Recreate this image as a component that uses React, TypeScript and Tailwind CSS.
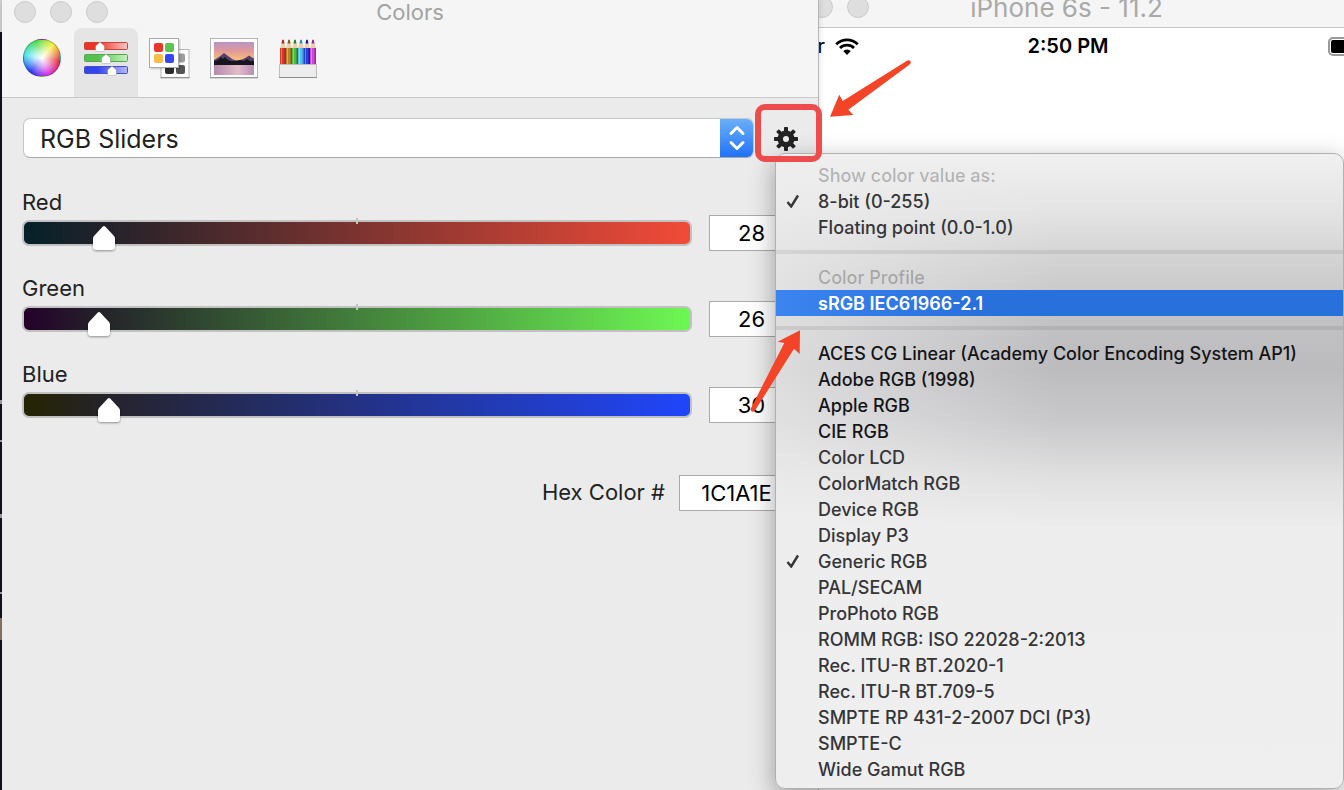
import React, { useState } from "react";

const FONT = "font-['Inter','Liberation_Sans',sans-serif]";

const PROFILES = [
  "ACES CG Linear (Academy Color Encoding System AP1)",
  "Adobe RGB (1998)",
  "Apple RGB",
  "CIE RGB",
  "Color LCD",
  "ColorMatch RGB",
  "Device RGB",
  "Display P3",
  "Generic RGB",
  "PAL/SECAM",
  "ProPhoto RGB",
  "ROMM RGB: ISO 22028-2:2013",
  "Rec. ITU-R BT.2020-1",
  "Rec. ITU-R BT.709-5",
  "SMPTE RP 431-2-2007 DCI (P3)",
  "SMPTE-C",
  "Wide Gamut RGB",
];

function TrafficLights() {
  return (
    <div className="flex gap-3.5">
      {["Close", "Minimize", "Zoom"].map((name) => (
        <button
          key={name}
          type="button"
          aria-label={name}
          className="size-[22px] shrink-0 rounded-full border border-[#cbcbcb] bg-[#dedede]"
        />
      ))}
    </div>
  );
}

function WheelIcon() {
  return (
    <span className="size-[38px] rounded-full border border-black/25 bg-[radial-gradient(circle,#fff_0%,rgba(255,255,255,0.6)_30%,rgba(255,255,255,0)_68%),conic-gradient(from_100deg,#e8303c,#d838e8_60deg,#2a3cf0_120deg,#4fe6f0_180deg,#4fdc50_240deg,#f6f040_300deg,#e8303c)]" />
  );
}

function SlidersIcon() {
  const rows = [
    { y: 1, id: "si-r", a: "#ee3322", b: "#fbc6c6", s: "#c8433a", x: 17 },
    { y: 13, id: "si-g", a: "#55c04d", b: "#c6f4bd", s: "#58a650", x: 23 },
    { y: 25, id: "si-b", a: "#3344ee", b: "#b5b9fb", s: "#4650c0", x: 29 },
  ];
  return (
    <svg width="46" height="36" viewBox="0 -1 46 36" aria-hidden="true">
      {rows.map((r) => (
        <g key={r.id}>
          <linearGradient id={r.id}>
            <stop offset="0.3" stopColor={r.a} />
            <stop offset="1" stopColor={r.b} />
          </linearGradient>
          <rect x="1.5" y={r.y + 0.5} width="43" height="7" rx="1" fill={`url(#${r.id})`} stroke={r.s} />
          <path
            d={`M${r.x} ${r.y} l4.500 4 v4 q0 1.500 -1.500 1.500 h-6 q-1.500 0 -1.500 -1.500 v-4 z`}
            fill="#fff"
            stroke="#0004"
            strokeWidth="0.6"
          />
        </g>
      ))}
    </svg>
  );
}

function PalettesIcon() {
  return (
    <svg width="42" height="42" viewBox="0 0 42 42" aria-hidden="true">
      <rect x="12" y="12.5" width="28" height="28" fill="#fff" stroke="#b4b4b4" />
      <path d="M11.5 40.8h29" stroke="#858585" />
      <rect x="27" y="16.500" width="9" height="9" rx="2" fill="#9d9d9d" />
      <rect x="16" y="28" width="9" height="9" rx="2" fill="#2d2d2d" />
      <rect x="27" y="28" width="9" height="9" rx="2" fill="#555" />
      <rect x="1.500" y="2.500" width="30" height="30" fill="#0002" />
      <rect x="0.500" y="1.500" width="29" height="29" fill="#fff" stroke="#a9a9a9" />
      <rect x="5" y="6" width="9" height="9" rx="2" fill="#ea3528" />
      <rect x="16" y="6" width="9" height="9" rx="2" fill="#5dc450" />
      <rect x="5" y="17" width="9" height="9" rx="2" fill="#f7be45" />
      <rect x="16" y="17" width="9" height="9" rx="2" fill="#3547f0" />
    </svg>
  );
}

function PictureIcon() {
  return (
    <svg width="48" height="42" viewBox="0 0 48 42" aria-hidden="true">
      <defs>
        <linearGradient id="sky" x1="0" y1="0" x2="0" y2="1">
          <stop offset="0" stopColor="#b795c4" />
          <stop offset="0.4" stopColor="#e29a98" />
          <stop offset="0.9" stopColor="#ffcc6c" />
        </linearGradient>
        <linearGradient id="lake">
          <stop offset="0" stopColor="#b48bab" />
          <stop offset="0.6" stopColor="#e3bccb" />
          <stop offset="1" stopColor="#b88fb2" />
        </linearGradient>
      </defs>
      <rect x="0.500" y="1.500" width="47" height="39" fill="#fff" stroke="#b5b5b5" />
      <path d="M0 40.8h48" stroke="#8a8a8a" />
      <rect x="4" y="5" width="40" height="23" fill="url(#sky)" />
      <rect x="4" y="27" width="40" height="11" fill="url(#lake)" />
      <path d="M4 23l5-3 5-4 4 3 5 3.500 4 1 5-1 4-2 3-2 3 2 2 1v5.500H4z" fill="#54406e" />
      <path d="M4 24l4-1 3-3 2 2 2-2 3 3 3 1 5 0 4-1 4 1 3-2 3 2 4 0v4H4z" fill="#17151f" />
    </svg>
  );
}

function PencilsIcon() {
  const pencils = [
    ["#d8372c", "#a52a22"],
    ["#b8862c", "#7d5c1b"],
    ["#4fb83c", "#2c7d20"],
    ["#56bdf0", "#2f86b8"],
    ["#2340e0", "#13228f"],
    ["#cf45d8", "#922c9a"],
  ];
  return (
    <svg width="40" height="42" viewBox="0 0 40 42" aria-hidden="true">
      {pencils.map(([c, d], i) => {
        const x = 2 + i * 6;
        return (
          <g key={c}>
            <path d={`M${x} 12l1.800-7h2.400l1.800 7z`} fill="#ecd0ae" />
            <path d={`M${x + 1.5} 6.500l0.700-3.500q0.800-0.800 1.600 0l0.700 3.500z`} fill={d} />
            <rect x={x} y="11" width="6" height="16" fill={c} />
            <rect x={x + 4.5} y="11" width="1.5" height="16" fill={d} />
            <rect x={x + 1} y="11" width="1" height="16" fill="#fff5" />
          </g>
        );
      })}
      <path d="M1.500 27.500h37v13h-37z" fill="#ececec" stroke="#bdbdbd" />
      <path d="M1 40.500h38" stroke="#8c8c8c" />
    </svg>
  );
}

function GearIcon() {
  return (
    <svg width="24" height="24" viewBox="-12 -12 24 24" aria-hidden="true" fill="#222">
      {[0, 45, 90, 135].map((a) => (
        <rect key={a} x="-2" y="-12" width="4" height="24" rx="0.800" transform={`rotate(${a})`} />
      ))}
      <circle r="8.500" />
      <circle r="3" fill="#ebebeb" />
    </svg>
  );
}

function CheckMark() {
  return (
    <svg width="14" height="14" viewBox="0 0 14 14" aria-hidden="true" fill="none" stroke="currentColor" strokeWidth="2.400">
      <path d="M1.500 8l3.700 4.500L12 1.500" />
    </svg>
  );
}

const TABS = [
  { name: "Color Wheel", icon: <WheelIcon /> },
  { name: "Color Sliders", icon: <SlidersIcon /> },
  { name: "Color Palettes", icon: <PalettesIcon /> },
  { name: "Image Palettes", icon: <PictureIcon /> },
  { name: "Pencils", icon: <PencilsIcon /> },
];

function ChannelSlider({
  label,
  value,
  gradient,
  onChange,
}: {
  label: string;
  value: number;
  gradient: string;
  onChange: (v: number) => void;
}) {
  const id = `channel-${label.toLowerCase()}`;
  return (
    <div>
      <label htmlFor={id} className="block h-[27px] text-[22px] leading-7 text-[#222]">
        {label}
      </label>
      <div className="flex items-center gap-[17px]">
        <div className={`relative h-[26px] flex-1 rounded-[7px] border-2 border-[#c1c1c1] bg-origin-border ${gradient}`}>
          <span className="absolute -top-1 left-1/2 h-1.5 w-0.5 -translate-x-1/2 bg-[#c4c4c4]" />
          <div className="absolute -inset-x-0.5 top-1 h-7">
            <svg
              width="22"
              height="26"
              viewBox="0 0 22 26"
              aria-hidden="true"
              className="absolute top-0 drop-shadow-[0_1px_1px_rgba(0,0,0,0.4)]"
              style={{ left: `calc((100% - 22px) * ${value / 255})` }}
            >
              <path d="M11 0q.7 0 1.200.6L21 10q1 1.200 1 2.500V21q0 3-3 3H3q-3 0-3-3v-8.500Q0 11.200 1 10L9.800.6Q10.300 0 11 0z" fill="#fff" />
            </svg>
          </div>
          <input
            id={id}
            type="range"
            min={0}
            max={255}
            value={value}
            onChange={(e) => onChange(Number(e.target.value))}
            className="absolute inset-0 m-0 h-full w-full opacity-0"
          />
        </div>
        <input
          type="text"
          aria-label={`${label} value`}
          value={value}
          onChange={(e) => onChange(Math.min(255, Number(e.target.value) || 0))}
          className="h-9 w-[85px] border border-[#a9a9a9] bg-white text-center text-[22px] text-black"
        />
      </div>
    </div>
  );
}

function ColorsWindow() {
  const [rgb, setRgb] = useState({ r: 28, g: 26, b: 30 });
  const hex = [rgb.r, rgb.g, rgb.b]
    .map((v) => v.toString(16).padStart(2, "0"))
    .join("")
    .toUpperCase();
  return (
    <section
      aria-label="Colors"
      className="absolute inset-y-0 left-0.5 w-[817px] border-r border-[#b5b5b5] bg-[#ebebeb] shadow-[0_0_6px_rgba(0,0,0,0.15)]"
    >
      <header className="border-b border-[#c9c9c9] bg-[#f5f5f5]">
        <div className="grid h-7 grid-cols-[1fr_auto_1fr] px-3">
          <div className="pt-px">
            <TrafficLights />
          </div>
          <h1 className="text-[22px] leading-6 text-[#a3a3a3]">Colors</h1>
        </div>
        <div role="tablist" className="flex pl-2">
          {TABS.map((t, i) => (
            <button
              key={t.name}
              type="button"
              role="tab"
              aria-label={t.name}
              aria-selected={i === 1}
              className={`flex h-[69px] w-16 items-start justify-center rounded-t-lg ${
                i === 1 ? "bg-[#e5e5e5]" : ""
              }`}
            >
              <span className="flex h-[60px] items-center">{t.icon}</span>
            </button>
          ))}
        </div>
      </header>

      <div className="pt-5 pr-6 pl-5">
        <div className="-mr-1 flex items-center">
          <div className="relative ml-px flex h-10 flex-1 overflow-hidden rounded-[7px] border border-[#c6c6c6] border-b-[#a8a8a8] bg-white">
            <select
              aria-label="Slider mode"
              className="h-full w-full appearance-none bg-transparent pt-0.5 pl-4 text-[25px] text-[#222]"
            >
              <option>RGB Sliders</option>
            </select>
            <span className="pointer-events-none absolute -inset-y-px -right-px flex w-[34px] items-center justify-center bg-linear-to-b from-[#6cb0f8] to-[#1d70f8]">
              <svg width="18" height="26" viewBox="0 0 18 26" aria-hidden="true" fill="none" stroke="#fff" strokeWidth="3" strokeLinecap="round" strokeLinejoin="round">
                <path d="M3 8.500l6-6 6 6M3 17.500l6 6 6-6" />
              </svg>
            </span>
          </div>
          <button type="button" aria-label="Color options" className="ml-5 flex h-10 w-6 items-center justify-center pt-0.5">
            <GearIcon />
          </button>
        </div>

        <div className="mt-[30px] flex flex-col gap-[23px]">
          <ChannelSlider
            label="Red"
            value={rgb.r}
            gradient="bg-[linear-gradient(90deg,#03212a_0%,#25222a_13%,#f24b38_100%)]"
            onChange={(r) => setRgb({ ...rgb, r })}
          />
          <ChannelSlider
            label="Green"
            value={rgb.g}
            gradient="bg-[linear-gradient(90deg,#24002a_0%,#24262a_13%,#6df953_100%)]"
            onChange={(g) => setRgb({ ...rgb, g })}
          />
          <ChannelSlider
            label="Blue"
            value={rgb.b}
            gradient="bg-[linear-gradient(90deg,#252400_0%,#25232c_13%,#2046fb_100%)]"
            onChange={(b) => setRgb({ ...rgb, b })}
          />
        </div>

        <div className="mt-[52px] flex items-start justify-end gap-3.5">
          <label htmlFor="hex" className="pt-[3px] text-[22px] leading-7 text-[#222]">
            Hex Color #
          </label>
          <input
            id="hex"
            type="text"
            readOnly
            value={hex}
            className="h-9 w-[115px] border border-[#a9a9a9] bg-white text-center text-[22px] text-black"
          />
        </div>
      </div>
    </section>
  );
}

function SimulatorWindow() {
  return (
    <section
      aria-label="iPhone simulator"
      className="absolute inset-y-0 left-[768px] w-[600px] bg-white"
    >
      <header className="flex h-7 items-start border-b border-[#c6c6c6] bg-[#f5f5f5]">
        <div className="-mt-1 w-0 pl-[7px]">
          <div className="w-[100px]">
            <TrafficLights />
          </div>
        </div>
        <h2 className="flex-1 pr-2.5 text-center text-[26px] leading-4 text-[#a9a9a9]">iPhone 6s - 11.2</h2>
      </header>
      <div className="grid grid-cols-[1fr_auto_1fr] items-center pt-1 text-[20px] leading-7">
        <div className="flex items-center gap-2.5 text-black">
          <span className="flex w-[57px] justify-end">Carrier</span>
          <svg width="24" height="17" viewBox="0 0 24 17" aria-label="Wi-Fi" role="img" fill="none" stroke="#000" strokeWidth="2.800">
            <path d="M1.200 6.200a15.500 15.500 0 0 1 21.600 0M5 10a10 10 0 0 1 14 0" />
            <path d="M12 17l-3.800-3.900a5.500 5.500 0 0 1 7.600 0z" fill="#000" stroke="none" />
          </svg>
        </div>
        <time className="font-semibold text-black">2:50 PM</time>
        <div className="flex justify-end pr-2">
          <span className="h-[19px] w-8 rounded-[5px] border-2 border-[#999] p-px">
            <span className="block h-full rounded-[2px] bg-black" />
          </span>
        </div>
      </div>
    </section>
  );
}

function MenuItem({
  children,
  checked = false,
  active = false,
  strong = false,
}: {
  children: React.ReactNode;
  checked?: boolean;
  active?: boolean;
  strong?: boolean;
}) {
  const tone = active
    ? "bg-[linear-gradient(90deg,#3c84ef,#2870dc_35%)] font-semibold text-white"
    : strong
      ? "font-medium text-[#141416]"
      : "font-medium text-[#353538]";
  return (
    <button
      type="button"
      role="menuitemradio"
      aria-checked={checked}
      className={`flex h-[26px] w-full items-center text-left ${tone}`}
    >
      <span className="flex w-[42px] pl-2.5">{checked && <CheckMark />}</span>
      {children}
    </button>
  );
}

function MenuHeading({ children }: { children: React.ReactNode }) {
  return <div className="h-[26px] pl-[42px] leading-7 font-medium text-black/25">{children}</div>;
}

function Separator() {
  return <div role="separator" className="my-2.5 h-1 bg-black/8" />;
}

function OptionsMenu() {
  return (
    <div
      role="menu"
      className="absolute top-[153px] right-0 left-[775px] overflow-hidden rounded-[10px] border border-[#b0b0b2] bg-[linear-gradient(90deg,rgba(238,238,239,0.65),rgba(238,238,239,0)_50%),linear-gradient(180deg,#f0f0f1_0%,#e4e4e5_9%,#d2d2d3_17%,#c2c2c4_26%,#bcbcbe_34%,#c8c8ca_42%,#e0e0e1_51%,#ededee_59%,#efefef_100%)] pt-2 pb-1.5 text-[18px] shadow-[0_8px_26px_rgba(0,0,0,0.35)]"
    >
      <MenuHeading>Show color value as:</MenuHeading>
      <MenuItem checked>8-bit (0-255)</MenuItem>
      <MenuItem>Floating point (0.0-1.0)</MenuItem>
      <Separator />
      <MenuHeading>Color Profile</MenuHeading>
      <MenuItem active>sRGB IEC61966-2.1</MenuItem>
      <Separator />
      {PROFILES.map((p, i) => (
        <MenuItem key={p} checked={p === "Generic RGB"} strong={i < 4}>
          {p}
        </MenuItem>
      ))}
    </div>
  );
}

function Annotations() {
  return (
    <div className="pointer-events-none" aria-hidden="true">
      <div className="absolute top-[104px] left-[755px] h-[58px] w-[67px] rounded-[10px] border-6 border-[#ee4c4c]" />
      <svg className="absolute top-[56px] left-[826px]" width="90" height="66" viewBox="826 56 90 66" fill="#f34427">
        <path d="M830 116.700l9.300-22 3.400 6.300 64.300-40.300q2.500-1 3.500.5t-.5 3l-61.700 45.500 5 5.300z" />
      </svg>
      <svg className="absolute top-[326px] left-[746px]" width="60" height="92" viewBox="746 326 60 92" fill="#f34427">
        <path d="M800 330.300l-22.300 11.400 6.600 1.300-33.600 65.700q-.4 2 1.300 2.700t2.800-.6l39.200-62.100 5.700 5.300z" />
      </svg>
    </div>
  );
}

export default function App() {
  return (
    <main className={`relative h-screen min-h-[790px] overflow-hidden bg-[#12121e] ${FONT}`}>
      <svg className="absolute top-0 left-0" width="2" height="790" viewBox="0 0 2 790" aria-hidden="true">
        <path d="M0 0h2v32H0z" fill="#d2d2d4" />
        <path d="M0 400h2v4H0zM0 440h2v2H0zM0 514h2v4H0zM0 592h2v2H0z" fill="#a0a0a4" />
        <path d="M0 618h2v22H0z" fill="#8a7564" />
      </svg>
      <SimulatorWindow />
      <ColorsWindow />
      <OptionsMenu />
      <Annotations />
    </main>
  );
}
